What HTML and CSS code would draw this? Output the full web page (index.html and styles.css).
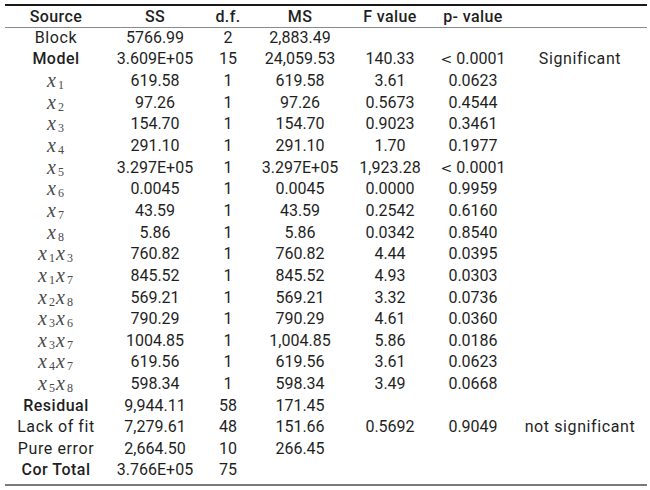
FILE: index.html
```html
<!DOCTYPE html>
<html>
<head>
<meta charset="utf-8">
<link rel="stylesheet" href="styles.css">
</head>
<body>
<table class="anova">
  <colgroup>
    <col class="c1"><col class="c2"><col class="c3"><col class="c4"><col class="c5"><col class="c6"><col class="c7">
  </colgroup>
  <thead>
    <tr><th>Source</th><th>SS</th><th>d.f.</th><th>MS</th><th>F value</th><th>p- value</th><th></th></tr>
  </thead>
  <tbody>
    <tr><td class="t">Block</td><td>5766.99</td><td>2</td><td>2,883.49</td><td></td><td></td><td></td></tr>
    <tr><td class="t b">Model</td><td>3.609E+05</td><td>15</td><td>24,059.53</td><td>140.33</td><td><span class="lt">&lt;</span> 0.0001</td><td class="t">Significant</td></tr>
    <tr><td><span class="m">x<sub>1</sub></span></td><td>619.58</td><td>1</td><td>619.58</td><td>3.61</td><td>0.0623</td><td></td></tr>
    <tr><td><span class="m">x<sub>2</sub></span></td><td>97.26</td><td>1</td><td>97.26</td><td>0.5673</td><td>0.4544</td><td></td></tr>
    <tr><td><span class="m">x<sub>3</sub></span></td><td>154.70</td><td>1</td><td>154.70</td><td>0.9023</td><td>0.3461</td><td></td></tr>
    <tr><td><span class="m">x<sub>4</sub></span></td><td>291.10</td><td>1</td><td>291.10</td><td>1.70</td><td>0.1977</td><td></td></tr>
    <tr><td><span class="m">x<sub>5</sub></span></td><td>3.297E+05</td><td>1</td><td>3.297E+05</td><td>1,923.28</td><td><span class="lt">&lt;</span> 0.0001</td><td></td></tr>
    <tr><td><span class="m">x<sub>6</sub></span></td><td>0.0045</td><td>1</td><td>0.0045</td><td>0.0000</td><td>0.9959</td><td></td></tr>
    <tr><td><span class="m">x<sub>7</sub></span></td><td>43.59</td><td>1</td><td>43.59</td><td>0.2542</td><td>0.6160</td><td></td></tr>
    <tr><td><span class="m">x<sub>8</sub></span></td><td>5.86</td><td>1</td><td>5.86</td><td>0.0342</td><td>0.8540</td><td></td></tr>
    <tr><td><span class="m">x<sub>1</sub>x<sub>3</sub></span></td><td>760.82</td><td>1</td><td>760.82</td><td>4.44</td><td>0.0395</td><td></td></tr>
    <tr><td><span class="m">x<sub>1</sub>x<sub>7</sub></span></td><td>845.52</td><td>1</td><td>845.52</td><td>4.93</td><td>0.0303</td><td></td></tr>
    <tr><td><span class="m">x<sub>2</sub>x<sub>8</sub></span></td><td>569.21</td><td>1</td><td>569.21</td><td>3.32</td><td>0.0736</td><td></td></tr>
    <tr><td><span class="m">x<sub>3</sub>x<sub>6</sub></span></td><td>790.29</td><td>1</td><td>790.29</td><td>4.61</td><td>0.0360</td><td></td></tr>
    <tr><td><span class="m">x<sub>3</sub>x<sub>7</sub></span></td><td>1004.85</td><td>1</td><td>1,004.85</td><td>5.86</td><td>0.0186</td><td></td></tr>
    <tr><td><span class="m">x<sub>4</sub>x<sub>7</sub></span></td><td>619.56</td><td>1</td><td>619.56</td><td>3.61</td><td>0.0623</td><td></td></tr>
    <tr><td><span class="m">x<sub>5</sub>x<sub>8</sub></span></td><td>598.34</td><td>1</td><td>598.34</td><td>3.49</td><td>0.0668</td><td></td></tr>
    <tr><td class="t b">Residual</td><td>9,944.11</td><td>58</td><td>171.45</td><td></td><td></td><td></td></tr>
    <tr><td class="t">Lack of fit</td><td>7,279.61</td><td>48</td><td>151.66</td><td>0.5692</td><td>0.9049</td><td class="t">not significant</td></tr>
    <tr><td class="t">Pure error</td><td>2,664.50</td><td>10</td><td>266.45</td><td></td><td></td><td></td></tr>
    <tr class="last"><td class="t b">Cor Total</td><td>3.766E+05</td><td>75</td><td></td><td></td><td></td><td></td></tr>
  </tbody>
</table>
</body>
</html>
```

FILE: styles.css
```css
html, body {
  margin: 0;
  padding: 0;
  background: #ffffff;
}

body {
  padding: 4px 3px 0 5px;
}

.anova {
  width: 642px;
  border-collapse: collapse;
  table-layout: fixed;
  font-family: Roboto, "Liberation Sans", sans-serif;
  font-size: 16px;
  color: #1f1f1f;
  border-top: 2px solid #1a1a1a;
  border-bottom: 2px solid #7a7a7a;
}

.c1 { width: 102px; }
.c2 { width: 96px; }
.c3 { width: 50px; }
.c4 { width: 94px; }
.c5 { width: 86px; }
.c6 { width: 80px; }
.c7 { width: 134px; }

.anova th,
.anova td {
  padding: 0;
  text-align: center;
  white-space: nowrap;
  line-height: 1;
}

.anova thead tr {
  height: 22px;
}

.anova thead th {
  font-weight: 500;
  letter-spacing: 0.4px;
  padding-top: 2px;
  border-bottom: 1px solid #8a8a8a;
}

.anova tbody tr {
  height: 21.65px;
}

.anova tbody tr.last {
  height: 25px;
}

.anova tbody tr.last td {
  padding-bottom: 3px;
}

.t {
  letter-spacing: 0.6px;
}

.b {
  font-weight: 500;
  letter-spacing: 0.5px;
}

.m {
  font-family: "Liberation Serif", "DejaVu Serif", serif;
  font-style: italic;
  font-size: 20px;
  line-height: 16px;
  color: #4a4a4a;
}

.m sub {
  font-family: "Liberation Serif", serif;
  font-style: normal;
  font-size: 12px;
  vertical-align: -2px;
  line-height: 0;
  margin-left: 2px;
  margin-right: 1px;
}

.lt {
  font-family: "DejaVu Sans", sans-serif;
  font-size: 14px;
}
```
